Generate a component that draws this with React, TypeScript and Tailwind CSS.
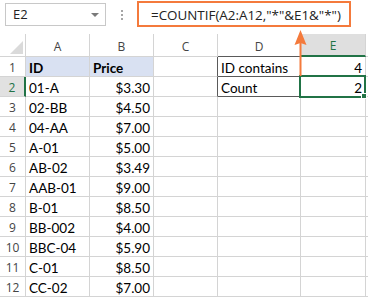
import React from 'react'

const rows: [string, string][] = [
   ['01-A', '$3.30'],
   ['02-BB', '$4.50'],
   ['04-AA', '$7.00'],
   ['A-01', '$5.00'],
   ['AB-02', '$3.49'],
   ['AAB-01', '$9.00'],
   ['B-01', '$8.50'],
   ['BB-002', '$4.00'],
   ['BBC-04', '$5.90'],
   ['C-01', '$8.50'],
   ['CC-02', '$7.00'],
]

const cell = "h-full border-r border-b border-[#d4d4d4] flex items-center pt-[3px] px-[3px]"
const head = "h-full border-r border-b border-[#d4d4d4] flex items-center justify-center pt-[3px]"

const App = () => {
   return (
      <div className="relative w-[368px] h-[297px] overflow-hidden bg-white text-black" style={{ fontFamily: 'Lato, sans-serif' }}>

         {/* NAME BOX + FORMULA BAR */}
         <div className="flex h-[34px] items-start" style={{ fontFamily: '"Open Sans", sans-serif' }}>
            <div className="ml-[5px] mt-[3px] w-[101px] h-[23px] border border-[#c8c8c8] flex items-center pl-[7px] pr-[6px] text-[13px] text-[#222]">
               <span className="pt-[1px]">E2</span>
               <span className="ml-auto w-0 h-0 border-l-[4px] border-r-[4px] border-t-[4px] border-l-transparent border-r-transparent border-t-[#7a7a7a]"></span>
            </div>
            <div className="ml-[15px] mt-[10px] flex flex-col gap-[2px]">
               <span className="w-[2px] h-[2px] bg-[#a6a6a6]"></span>
               <span className="w-[2px] h-[2px] bg-[#a6a6a6]"></span>
               <span className="w-[2px] h-[2px] bg-[#a6a6a6]"></span>
            </div>
            <div className="ml-[14px] mt-[1px] w-[214px] h-[26px] border-2 border-[#f47a3c] flex items-center pl-[12px] pt-[3px] text-[13.4px] text-[#222] whitespace-nowrap">
               =COUNTIF(A2:A12,"*"&amp;E1&amp;"*")
            </div>
         </div>

         {/* COLUMN HEADERS */}
         <div className="flex h-[23px] text-[12px] text-[#444]" style={{ fontFamily: '"Open Sans", sans-serif' }}>
            <div className="w-[26px] h-full border-r border-b border-[#d4d4d4] flex items-end justify-end pr-[2px] pb-[2px]">
               <svg width="13" height="13" viewBox="0 0 13 13">
                  <path d="M13 0 L13 13 L0 13 Z" fill="#dadada" />
               </svg>
            </div>
            <div className={`w-[64px] ${head}`}>A</div>
            <div className={`w-[64px] ${head}`}>B</div>
            <div className={`w-[64px] ${head}`}>C</div>
            <div className={`w-[83px] ${head} border-b-[#5a5a5a]`}>D</div>
            <div className={`w-[65px] ${head} border-b-2 border-b-[#217346] bg-[#dfdfdf] text-[#217346]`}>E</div>
            <div className="flex-1 h-full border-b border-[#d4d4d4]"></div>
         </div>

         {/* ROW 1 */}
         <div className="flex h-[20px] text-[13.5px]">
            <div className="w-[26px] h-full border-r border-b border-[#d4d4d4] flex items-center justify-center pt-[2px] text-[12px] text-[#444]" style={{ fontFamily: '"Open Sans", sans-serif' }}>1</div>
            <div className={`w-[64px] ${cell} bg-[#d9e1f2] font-bold`}>ID</div>
            <div className={`w-[64px] ${cell} bg-[#d9e1f2] font-bold`}>Price</div>
            <div className={`w-[64px] ${cell} border-r-[#5a5a5a]`}></div>
            <div className={`w-[83px] ${cell} border-r-[#5a5a5a] border-b-[#5a5a5a]`}>ID contains</div>
            <div className={`w-[65px] ${cell} justify-end`}>4</div>
            <div className="flex-1 h-full border-b border-[#d4d4d4]"></div>
         </div>

         {rows.map((item, i) => (
            <div key={i} className="flex h-[20px] text-[13.5px]">
               <div className={`w-[26px] h-full border-b border-[#d4d4d4] flex items-center justify-center pt-[2px] text-[12px] ${i === 0 ? 'bg-[#e1e1e1] text-[#217346] border-r-2 border-r-[#217346]' : 'text-[#444] border-r'}`} style={{ fontFamily: '"Open Sans", sans-serif' }}>{i + 2}</div>
               <div className={`w-[64px] ${cell}`}>{item[0]}</div>
               <div className={`w-[64px] ${cell} justify-end`}>{item[1]}</div>
               <div className={`w-[64px] ${cell} ${i === 0 ? 'border-r-[#5a5a5a]' : ''}`}></div>
               <div className={`w-[83px] ${cell} ${i === 0 ? 'border-r-[#5a5a5a] border-b-[#5a5a5a]' : ''}`}>{i === 0 ? 'Count' : ''}</div>
               <div className={`w-[65px] ${cell} justify-end`}>{i === 0 ? '2' : ''}</div>
               <div className="flex-1 h-full border-b border-[#d4d4d4]"></div>
            </div>
         ))}

         {/* SELECTED CELL E2 */}
         <div className="absolute left-[299px] top-[75px] w-[67px] h-[23px] border-2 border-[#217346]"></div>
         <div className="absolute left-[361px] top-[93px] w-[6px] h-[6px] bg-[#217346] border border-white"></div>

         {/* ARROW */}
         <svg className="absolute left-[290px] top-[28px]" width="22" height="50" viewBox="0 0 22 50">
            <path d="M10.5 2 L16.5 17 L10.5 15 L4.5 17 Z" fill="#f47a3c" />
            <rect x="9.5" y="14" width="2" height="34" fill="#f47a3c" />
         </svg>
      </div>
   )
}

export default App
